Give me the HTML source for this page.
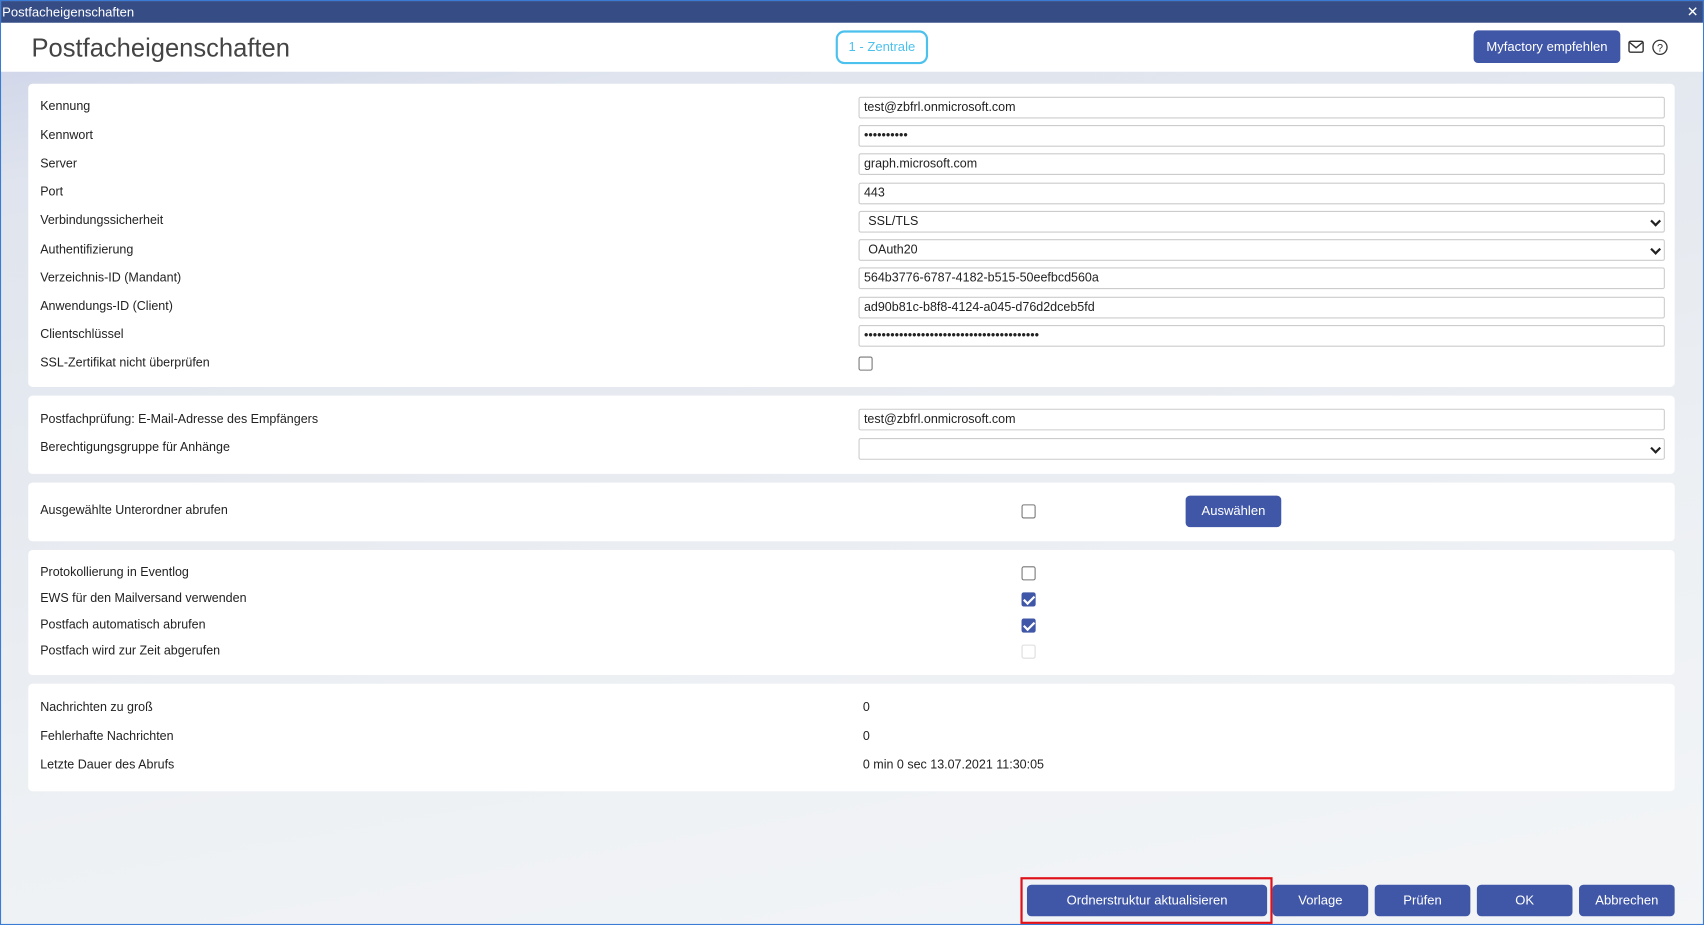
<!DOCTYPE html>
<html><head><meta charset="utf-8"><style>
*{box-sizing:border-box;margin:0;padding:0}
html,body{width:1704px;height:925px;overflow:hidden;background:#fff}
#w{width:1568px;height:851px;transform:scale(1.08673,1.08696);transform-origin:0 0;position:relative;font-family:"Liberation Sans",sans-serif;font-size:11.5px;color:#222;border:1px solid #3a7bd5;background:linear-gradient(170deg,#c9d0e6 0%,#dfe4ee 15%,#e6eaf0 40%,#eef1f4 70%,#f3f5f7 100%)}
.tb{position:absolute;left:0;top:0;width:100%;height:20px;background:#354c85;color:#fff;font-size:12px;line-height:20px;padding-left:1px}
.tb .x{position:absolute;right:4px;top:0;font-size:13px}
.hd{position:absolute;left:0;top:20px;width:100%;height:45px;background:#fff}
.hd h1{position:absolute;left:28px;top:10px;font-size:23.5px;font-weight:normal;color:#444}
.zen{position:absolute;left:768px;top:7px;width:85px;height:31px;border:2px solid #4cc1ee;border-radius:8px;color:#4cc1ee;text-align:center;line-height:27px;font-size:12px}
.my{position:absolute;left:1355px;top:7px;width:135px;height:30px;background:#4057a8;border-radius:4px;color:#fff;text-align:center;line-height:30px;font-size:12px}
.card{position:absolute;left:25px;width:1515px;background:#fff;border-radius:4px}
.l{position:absolute;left:11px}
.in{position:absolute;left:764px;width:742px;height:20px;border:1px solid #ccc;border-radius:2px;line-height:18px;padding-left:4px}
.sel::after{content:"";position:absolute;right:4px;top:5px;width:5px;height:5px;border-right:2px solid #222;border-bottom:2px solid #222;transform:rotate(45deg)}
.cb{position:absolute;width:13px;height:13px;border:1px solid #777;border-radius:2px;background:#fff}
.cb.on{background:#4057a8;border-color:#4057a8}
.cb.on::after{content:"";position:absolute;left:3px;top:0px;width:4px;height:8px;border-right:2px solid #fff;border-bottom:2px solid #fff;transform:rotate(45deg)}
.cb.dis{border-color:#ddd}
.btn{position:absolute;top:813px;height:29px;background:#4057a8;border-radius:4px;color:#fff;text-align:center;line-height:29px;font-size:12px}
.v{position:absolute;left:768px}
</style></head><body><div id="w">
<div class="tb">Postfacheigenschaften<span class="x">✕</span></div>
<div class="hd"><h1>Postfacheigenschaften</h1><div class="zen">1 - Zentrale</div><div class="my">Myfactory empfehlen</div>
<svg style="position:absolute;left:1497px;top:16px" width="15" height="12" viewBox="0 0 15 12"><rect x="1" y="1" width="13" height="10" rx="1.5" fill="none" stroke="#333" stroke-width="1.3"/><path d="M1.5 2 L7.5 7 L13.5 2" fill="none" stroke="#333" stroke-width="1.3"/></svg>
<svg style="position:absolute;left:1519px;top:15px" width="15" height="15" viewBox="0 0 15 15"><circle cx="7.5" cy="7.5" r="6.5" fill="none" stroke="#333" stroke-width="1.2"/><text x="7.5" y="11.5" font-size="10" text-anchor="middle" font-family="Liberation Sans" fill="#333">?</text></svg>
</div>
<div class="card" style="top:76px;height:279px">
<div class="l" style="top:15px">Kennung</div><div class="in" style="top:12px">test@zbfrl.onmicrosoft.com</div>
<div class="l" style="top:42px">Kennwort</div><div class="in" style="top:38px">••••••••••</div>
<div class="l" style="top:68px">Server</div><div class="in" style="top:64px">graph.microsoft.com</div>
<div class="l" style="top:94px">Port</div><div class="in" style="top:91px">443</div>
<div class="l" style="top:120px">Verbindungssicherheit</div><div class="in sel" style="top:117px;padding-left:8px">SSL/TLS</div>
<div class="l" style="top:147px">Authentifizierung</div><div class="in sel" style="top:143px;padding-left:8px">OAuth20</div>
<div class="l" style="top:173px">Verzeichnis-ID (Mandant)</div><div class="in" style="top:169px">564b3776-6787-4182-b515-50eefbcd560a</div>
<div class="l" style="top:199px">Anwendungs-ID (Client)</div><div class="in" style="top:196px">ad90b81c-b8f8-4124-a045-d76d2dceb5fd</div>
<div class="l" style="top:225px">Clientschlüssel</div><div class="in" style="top:222px">••••••••••••••••••••••••••••••••••••••••</div>
<div class="l" style="top:251px">SSL-Zertifikat nicht überprüfen</div><div class="cb" style="left:764px;top:251px"></div>
</div>
<div class="card" style="top:363px;height:72px">
<div class="l" style="top:16px">Postfachprüfung: E-Mail-Adresse des Empfängers</div><div class="in" style="top:12px">test@zbfrl.onmicrosoft.com</div>
<div class="l" style="top:42px">Berechtigungsgruppe für Anhänge</div><div class="in sel" style="top:39px"></div>
</div>
<div class="card" style="top:443px;height:54px">
<div class="l" style="top:20px">Ausgewählte Unterordner abrufen</div><div class="cb" style="left:914px;top:20px"></div>
<div style="position:absolute;left:1065px;top:12px;width:88px;height:29px;background:#4057a8;border-radius:4px;color:#fff;text-align:center;line-height:29px;font-size:12px">Auswählen</div>
</div>
<div class="card" style="top:505px;height:115px">
<div class="l" style="top:15px">Protokollierung in Eventlog</div><div class="cb" style="left:914px;top:15px"></div>
<div class="l" style="top:39px">EWS für den Mailversand verwenden</div><div class="cb on" style="left:914px;top:39px"></div>
<div class="l" style="top:63px">Postfach automatisch abrufen</div><div class="cb on" style="left:914px;top:63px"></div>
<div class="l" style="top:87px">Postfach wird zur Zeit abgerufen</div><div class="cb dis" style="left:914px;top:87px"></div>
</div>
<div class="card" style="top:628px;height:99px">
<div class="l" style="top:16px">Nachrichten zu groß</div><div class="v" style="top:16px">0</div>
<div class="l" style="top:43px">Fehlerhafte Nachrichten</div><div class="v" style="top:43px">0</div>
<div class="l" style="top:69px">Letzte Dauer des Abrufs</div><div class="v" style="top:69px">0 min 0 sec 13.07.2021 11:30:05</div>
</div>
<div style="position:absolute;left:938px;top:806px;width:232px;height:43px;border:2px solid #e0101a"></div>
<div class="btn" style="left:944px;width:221px">Ordnerstruktur aktualisieren</div>
<div class="btn" style="left:1170px;width:88px">Vorlage</div>
<div class="btn" style="left:1264px;width:88px">Prüfen</div>
<div class="btn" style="left:1358px;width:88px">OK</div>
<div class="btn" style="left:1452px;width:88px">Abbrechen</div>
</div></body></html>
